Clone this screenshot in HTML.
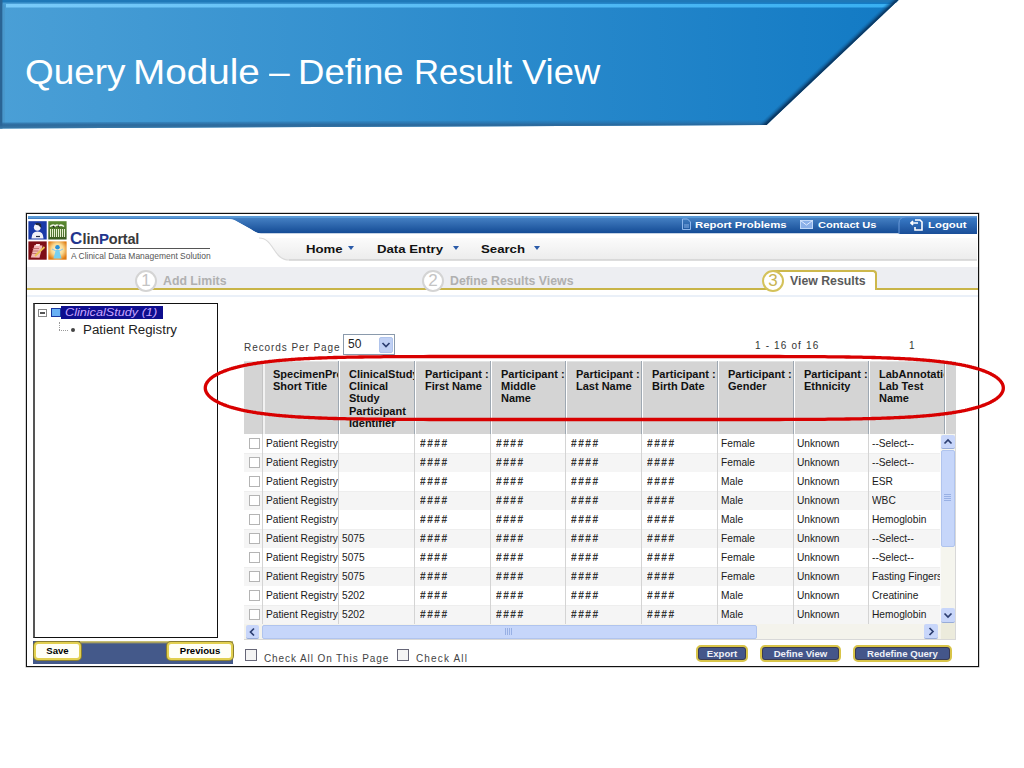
<!DOCTYPE html>
<html><head><meta charset="utf-8">
<style>
*{margin:0;padding:0;box-sizing:border-box}
html,body{width:1024px;height:768px;overflow:hidden;background:#fff;font-family:"Liberation Sans",sans-serif;position:relative}
.a{position:absolute}
.tw{position:absolute;top:52px;font-size:35px;color:#fff;white-space:nowrap;transform-origin:0 0;line-height:normal}
#shot{position:absolute;left:26px;top:213px;width:953px;height:454px;border:1px solid #111;box-shadow:0 0 0 0.5px rgba(0,0,0,0.35);background:#fff;overflow:hidden}
.ab{position:absolute}
.nav{position:absolute;top:243px;font-size:11px;font-weight:bold;color:#111;white-space:nowrap;transform:scaleX(1.2);transform-origin:0 0}
.tri{position:absolute;top:246px;width:0;height:0;border-left:3px solid transparent;border-right:3px solid transparent;border-top:4px solid #2a5aa8}
.toplink{position:absolute;top:219px;font-size:9.6px;font-weight:bold;color:#fff;white-space:nowrap}
.step{position:absolute;top:274px;font-size:12.3px;font-weight:bold;color:#b0b0b0;white-space:nowrap}
.circ{position:absolute;width:22px;height:22px;border-radius:50%;border:2px solid #d4d4d4;background:#fff;color:#c4c4c4;font-size:17px;line-height:18px;text-align:center}
.hc{position:absolute;top:368px;font-size:11px;font-weight:bold;line-height:12.2px;color:#111;padding-left:9px;white-space:nowrap;overflow:hidden;height:64px}
.hsep{position:absolute;top:361px;height:73px;width:2px;border-left:1px solid #9ea8b2;border-right:1px solid #fff}
.row{position:absolute;left:244px;width:700px;height:19px;background:#fff}
.row.alt{background:#f5f5f5;border-top:1px solid #eeeeee}
.cb{position:absolute;left:249px;width:11px;height:11px;border:1px solid #b4b4b4;background:#fff}
.cell{position:absolute;height:19px;line-height:19px;font-size:10.2px;color:#1a1a1a;white-space:nowrap;overflow:hidden}
.bsep{position:absolute;top:434px;height:190px;width:1px;background:#d4d4d4}
.btn{position:absolute;border-radius:4px;font-weight:bold;font-size:10px;text-align:center;white-space:nowrap}
.ybtn{position:absolute;top:645px;height:17px;border-radius:5px;background:#44568a;border:2px solid #d8c448;box-shadow:inset 0 0 0 1px #3a3a50;color:#eef0f6;font-size:9.6px;font-weight:bold;line-height:13px;text-align:center;white-space:nowrap}
</style></head><body>

<!-- banner -->
<svg class="a" style="left:0;top:0" width="1024" height="140">
 <defs>
  <linearGradient id="bg" x1="0" y1="0" x2="1" y2="0">
   <stop offset="0" stop-color="#4a9fd6"/>
   <stop offset="1" stop-color="#127ac4"/>
  </linearGradient>
  <linearGradient id="hl" x1="0" y1="0" x2="1" y2="0">
   <stop offset="0" stop-color="#7ccdfb"/>
   <stop offset="1" stop-color="#3ab2f4"/>
  </linearGradient>
  <linearGradient id="dg" gradientUnits="userSpaceOnUse" x1="833.5" y1="62.5" x2="828.5" y2="57.2">
   <stop offset="0" stop-color="#062848" stop-opacity="1"/>
   <stop offset="0.35" stop-color="#0a3a68" stop-opacity="0.85"/>
   <stop offset="1" stop-color="#127ac4" stop-opacity="0"/>
  </linearGradient>
  <linearGradient id="btg" x1="0" y1="0" x2="0" y2="1">
   <stop offset="0" stop-color="#2a70a8" stop-opacity="0"/>
   <stop offset="0.6" stop-color="#2a6496" stop-opacity="0.9"/>
   <stop offset="1" stop-color="#3a7aa8" stop-opacity="1"/>
  </linearGradient>
 </defs>
 <polygon points="0,0 898.5,0 766.5,125 0,128.5" fill="url(#bg)"/>
 <polygon points="0,0 898.5,0 896.5,2.5 0,2.5" fill="#1e78b8"/>
 <polygon points="6,4 894,4 890,7.5 6,7.5" fill="url(#hl)" opacity="0.95"/>
 <polygon points="0,0 2.5,0 2.5,128.5 0,128.5" fill="#2a6494"/>
 <polygon points="2.5,4 5,6 5,126 2.5,128" fill="#4a94c4" opacity="0.6"/>
 <polygon points="0,122.5 772,119.5 766.5,125 0,128.5" fill="url(#btg)"/>
 <polygon points="898.5,0 766.5,125 758,125 890,0" fill="url(#dg)"/>
</svg>
<div class="tw" style="left:24.9px;transform:scaleX(1.054)">Query</div>
<div class="tw" style="left:133.4px;transform:scaleX(1.105)">Module</div>
<div class="tw" style="left:268.5px;transform:scaleX(1.060)">–</div>
<div class="tw" style="left:298.3px;transform:scaleX(1.044)">Define</div>
<div class="tw" style="left:413.5px;transform:scaleX(0.990)">Result</div>
<div class="tw" style="left:522.2px;transform:scaleX(1.040)">View</div>

<div id="shot"></div>
<!-- header -->
<svg class="a" style="left:28px;top:215px" width="949" height="50">
 <defs>
  <linearGradient id="hb" x1="0" y1="0" x2="0" y2="1">
   <stop offset="0" stop-color="#4a86c8"/>
   <stop offset="1" stop-color="#134a94"/>
  </linearGradient>
  <linearGradient id="nb" x1="0" y1="0" x2="0" y2="1">
   <stop offset="0" stop-color="#fbfbfb"/>
   <stop offset="1" stop-color="#ececec"/>
  </linearGradient>
 </defs>
 <path d="M0 1 H949 V18.5 H233 C228 18.5 226 16 222 13.8 L208 6 C204 4 202 4 197 4 H0 Z" fill="url(#hb)"/>
 <path d="M0 1 H949 V3 H0Z" fill="#5a9ad6"/>
 <path d="M0 4 H197 C202 4 204 4 208 6 L222 13.8 C226 16 228 18.5 233 18.5 H949 V23 H0Z" fill="#fff"/>
 <path d="M231 23 H949 V45 H261 C245 45 246 23 231 23Z" fill="url(#nb)"/>
 <path d="M261 45 H949" stroke="#d2d2d2" stroke-width="1.5"/>
 <path d="M231 23 C246 23 245 45 261 45" stroke="#dadada" stroke-width="1.2" fill="none"/>
</svg>

<!-- logo icons -->
<svg class="a" style="left:27px;top:219px" width="42" height="43">
 <defs>
  <radialGradient id="og" cx="0.5" cy="0.45" r="0.6"><stop offset="0" stop-color="#fff8e0"/><stop offset="0.55" stop-color="#f8d890"/><stop offset="1" stop-color="#e07a10"/></radialGradient>
  <linearGradient id="gg" x1="0" y1="0" x2="0" y2="1"><stop offset="0" stop-color="#5a8a30"/><stop offset="1" stop-color="#3a5a20"/></linearGradient>
 </defs>
 <rect x="1.4" y="2.2" width="18.3" height="18.3" fill="#1a3aa8"/>
 <circle cx="10.3" cy="8.3" r="3.4" fill="#f4f4fa"/>
 <path d="M8 4.5 Q11 3 14 5 L14.5 9 L13 8 Q12 5.5 9 6Z" fill="#202840"/>
 <path d="M4.5 19.5 Q4.5 12.5 10.5 12.5 Q16.5 12.5 16.5 19.5Z" fill="#f0f0f8"/>
 <path d="M9 17.5 H13" stroke="#202840" stroke-width="1.2"/>
 <rect x="21.3" y="2.2" width="18.3" height="18.3" fill="url(#gg)"/>
 <path d="M23.5 10 V18 M25.5 10 V18 M27.5 10 V18 M29.5 10 V18 M31.5 10 V18 M33.5 10 V18 M35.5 10 V18 M37.5 10 V18" stroke="#e8f0d0" stroke-width="1.1"/>
 <path d="M23 7.5 Q26 5 28 7 Q30 5 32 7 Q34 5 37 7.5" stroke="#f4f8e8" stroke-width="1.6" fill="none"/>
 <path d="M26 7 L27.5 8.5 M31 6.5 L32.5 8.5" stroke="#202020" stroke-width="1.2"/>
 <rect x="1.4" y="22.4" width="18.3" height="18.3" fill="#7e0e16"/>
 <path d="M3.8 38.5 L7.5 26 L15.5 26.5 L12.5 38.8Z" fill="#f2b8b8"/>
 <path d="M9 25 L13 25 L12.6 27 L8.6 27Z" fill="#fce8e8"/>
 <path d="M5.5 29.5 H12 M5 32 H11.5 M4.5 34.5 H10" stroke="#b86060" stroke-width="0.8"/>
 <path d="M8 37 L17.5 28" stroke="#e8c050" stroke-width="1.8"/>
 <rect x="21.3" y="22.4" width="18.3" height="18.3" fill="url(#og)"/>
 <circle cx="30.5" cy="28.3" r="2.3" fill="#2890d8"/>
 <path d="M26.5 39.5 L28.8 31 L32.2 31 L34.5 39.5Z" fill="#78d0f0"/>
 <path d="M25 30 L29 32 M36 30 L32 32" stroke="#88c8f0" stroke-width="1"/>
</svg>
<div class="a" style="left:70px;top:229px;font-size:14.5px;font-weight:bold;color:#3a3a3a;white-space:nowrap;letter-spacing:-0.2px;line-height:20px"><span style="color:#22358e;font-size:17px;font-weight:bold;letter-spacing:0.3px">C</span>lin<span style="color:#22358e;font-size:15px;font-weight:bold">P</span>ortal</div>
<div class="a" style="left:70px;top:248px;width:140px;height:1px;background:#555"></div>
<div class="a" style="left:71px;top:251px;font-size:8.4px;color:#555;white-space:nowrap;transform:scaleX(1.01);transform-origin:0 0">A Clinical Data Management Solution</div>

<!-- top links -->
<svg class="a" style="left:880px;top:215px" width="97" height="19">
 <defs><linearGradient id="lg" x1="0" y1="0" x2="0" y2="1"><stop offset="0" stop-color="#3a7cc8"/><stop offset="1" stop-color="#1a4e98"/></linearGradient></defs>
 <path d="M19 19 L19 8 Q19 2 26 2 L97 2 L97 19Z" fill="url(#lg)"/>
 <path d="M19 19 L19 8 Q19 2 26 2 L97 2" stroke="#6a9ad8" stroke-width="1" fill="none"/>
</svg>
<svg class="a" style="left:681px;top:218px" width="12" height="13"><path d="M1.5 1 H6.5 L9.5 4 V11.5 H1.5Z" fill="none" stroke="#90b8ec" stroke-width="1"/><path d="M3 7 H8 M3 9 H8" stroke="#90b8ec" stroke-width="0.9"/></svg>
<svg class="a" style="left:800px;top:220px" width="14" height="10"><rect x="0.5" y="0.5" width="12" height="8" fill="#8ab0e8" stroke="#c0d8f8"/><path d="M0.5 0.5 L6.5 5 L12.5 0.5" stroke="#dfeaff" fill="none"/></svg>
<svg class="a" style="left:910px;top:218px" width="14" height="13"><path d="M5 2 H10 L12 4 V12 H5 V9" stroke="#fff" stroke-width="1.6" fill="none"/><path d="M1 5 H8 M3 3 L1 5 L3 7" stroke="#fff" stroke-width="1.6" fill="none"/></svg>
<div class="toplink" style="left:695px;transform:scaleX(1.185);transform-origin:0 0">Report Problems</div>
<div class="toplink" style="left:818px;transform:scaleX(1.155);transform-origin:0 0">Contact Us</div>
<div class="toplink" style="left:928px;transform:scaleX(1.185);transform-origin:0 0">Logout</div>

<!-- nav -->
<div class="nav" style="left:306px">Home</div><div class="tri" style="left:348px"></div>
<div class="nav" style="left:377px">Data Entry</div><div class="tri" style="left:453px"></div>
<div class="nav" style="left:481px">Search</div><div class="tri" style="left:534px"></div>

<!-- step bar -->
<div class="a" style="left:27px;top:267px;width:951px;height:21px;background:#edeef2"></div>
<div class="a" style="left:27px;top:288px;width:951px;height:2px;background:#c8b448"></div>
<div class="a" style="left:27px;top:295px;width:951px;height:2px;background:#eaf0f8"></div>
<div class="a" style="left:773px;top:270px;width:104px;height:20px;background:#fff;border:2px solid #cdb84c;border-left:none;border-bottom:none;border-radius:0 4px 0 0"></div>
<div class="circ" style="left:135px;top:270px">1</div><div class="step" style="left:163px">Add Limits</div>
<div class="circ" style="left:422px;top:270px">2</div><div class="step" style="left:450px">Define Results Views</div>
<div class="circ" style="left:762px;top:270px;border-color:#d4c25a;color:#c8b450">3</div><div class="step" style="left:790px;color:#5a5a5a">View Results</div>

<!-- tree -->
<div class="a" style="left:33px;top:303px;width:185px;height:335px;border:1px solid #111;border-left:2px solid #555;background:#fff"></div>
<div class="a" style="left:38px;top:309px;width:9px;height:8px;border:1px solid #888;background:#fff"></div>
<div class="a" style="left:40px;top:312px;width:5px;height:2px;background:#555"></div>
<div class="a" style="left:51px;top:308px;width:10px;height:9px;background:#68b0f4;border:1.5px solid #1838a0"></div>
<div class="a" style="left:61px;top:306px;width:102px;height:13px;background:#0e0e8e;color:#c8a4ff;font-style:italic;font-size:11px;line-height:13px;padding-left:4px;white-space:nowrap"><span style="display:inline-block;transform:scaleX(1.15);transform-origin:0 0">ClinicalStudy (1)</span></div>
<div class="a" style="left:59px;top:322px;width:1px;height:8px;border-left:1px dotted #999"></div>
<div class="a" style="left:59px;top:330px;width:9px;height:1px;border-top:1px dotted #999"></div>
<div class="a" style="left:71px;top:328px;width:4px;height:4px;border-radius:50%;background:#444"></div>
<div class="a" style="left:83px;top:323px;font-size:12px;color:#222;white-space:nowrap;transform:scaleX(1.11);transform-origin:0 0">Patient Registry</div>

<!-- save bar -->
<div class="a" style="left:33px;top:641px;width:200px;height:23px;background:#44598a"></div>
<div class="a" style="left:80px;top:641px;width:153px;height:3px;background:linear-gradient(#d8d080,#a8a060 50%,#44598a)"></div>
<div class="a" style="left:34px;top:642px;width:47px;height:18px;background:#fffff6;border:2px solid #e2d050;box-shadow:0 0 0 1px #8a7e30;border-radius:4px;font-size:9.6px;font-weight:bold;line-height:14px;text-align:center">Save</div>
<div class="a" style="left:167px;top:642px;width:66px;height:18px;background:#fffff6;border:2px solid #e2d050;box-shadow:0 0 0 1px #8a7e30;border-radius:4px;font-size:9.6px;font-weight:bold;line-height:14px;text-align:center">Previous</div>

<!-- records per page -->
<div class="a" style="left:244px;top:342px;font-size:10px;color:#3a3a3a;white-space:nowrap;letter-spacing:0.93px">Records Per Page</div>
<div class="a" style="left:343px;top:334px;width:52px;height:21px;border:1px solid #8a9aac;background:#fff;font-size:12px;line-height:19px;padding-left:4px;color:#222">50</div>
<div class="a" style="left:379px;top:337px;width:14px;height:16px;background:#c0d0f4;border:1px solid #b0c4ec;border-radius:2px"></div>
<svg class="a" style="left:379px;top:337px" width="14" height="16"><path d="M3.5 6 L7 9.5 L10.5 6" stroke="#2c3e70" stroke-width="1.7" fill="none"/></svg>
<div class="a" style="left:755px;top:340px;font-size:10px;color:#333;white-space:nowrap;letter-spacing:1.15px">1 - 16 of 16</div>
<div class="a" style="left:909px;top:340px;font-size:10px;color:#333;white-space:nowrap">1</div>

<!-- table header -->
<div class="a" style="left:244px;top:361px;width:712px;height:73px;background:#d4d4d4"></div>
<div class="a" style="left:244px;top:361px;width:712px;height:1px;background:#e2e4e4"></div>
<div class="hc" style="left:264px;width:75px">SpecimenProtocol<br>Short Title</div>
<div class="hc" style="left:340px;width:75px">ClinicalStudyParticipant<br>Clinical<br>Study<br>Participant<br>Identifier</div>
<div class="hc" style="left:416px;width:75px">Participant :<br>First Name</div>
<div class="hc" style="left:492px;width:74px">Participant :<br>Middle<br>Name</div>
<div class="hc" style="left:567px;width:75px">Participant :<br>Last Name</div>
<div class="hc" style="left:643px;width:75px">Participant :<br>Birth Date</div>
<div class="hc" style="left:719px;width:75px">Participant :<br>Gender</div>
<div class="hc" style="left:795px;width:74px">Participant :<br>Ethnicity</div>
<div class="hc" style="left:870px;width:74px">LabAnnotation<br>Lab Test<br>Name</div>
<div class="hsep" style="left:262px;border-left-color:#c4c4c4;border-right:2px solid #f2f2f2;width:3px"></div>
<div class="hsep" style="left:338px"></div>
<div class="hsep" style="left:414px"></div>
<div class="hsep" style="left:490px"></div>
<div class="hsep" style="left:565px"></div>
<div class="hsep" style="left:641px"></div>
<div class="hsep" style="left:717px"></div>
<div class="hsep" style="left:793px"></div>
<div class="hsep" style="left:868px"></div>
<div class="hsep" style="left:944px"></div>
<!-- body -->
<div class="row" style="top:434px"></div>
<div class="cb" style="top:438px"></div>
<div class="cell" style="left:266px;top:434px;width:72px">Patient Registry</div>
<div class="cell" style="left:342px;top:434px;width:72px"></div>
<div class="cell" style="left:420px;top:434px;width:72px;letter-spacing:1.5px;font-weight:bold;color:#333">####</div>
<div class="cell" style="left:496px;top:434px;width:71px;letter-spacing:1.5px;font-weight:bold;color:#333">####</div>
<div class="cell" style="left:571px;top:434px;width:72px;letter-spacing:1.5px;font-weight:bold;color:#333">####</div>
<div class="cell" style="left:647px;top:434px;width:72px;letter-spacing:1.5px;font-weight:bold;color:#333">####</div>
<div class="cell" style="left:721px;top:434px;width:72px">Female</div>
<div class="cell" style="left:797px;top:434px;width:71px">Unknown</div>
<div class="cell" style="left:872px;top:434px;width:71px">--Select--</div>
<div class="row alt" style="top:453px"></div>
<div class="cb" style="top:457px"></div>
<div class="cell" style="left:266px;top:453px;width:72px">Patient Registry</div>
<div class="cell" style="left:342px;top:453px;width:72px"></div>
<div class="cell" style="left:420px;top:453px;width:72px;letter-spacing:1.5px;font-weight:bold;color:#333">####</div>
<div class="cell" style="left:496px;top:453px;width:71px;letter-spacing:1.5px;font-weight:bold;color:#333">####</div>
<div class="cell" style="left:571px;top:453px;width:72px;letter-spacing:1.5px;font-weight:bold;color:#333">####</div>
<div class="cell" style="left:647px;top:453px;width:72px;letter-spacing:1.5px;font-weight:bold;color:#333">####</div>
<div class="cell" style="left:721px;top:453px;width:72px">Female</div>
<div class="cell" style="left:797px;top:453px;width:71px">Unknown</div>
<div class="cell" style="left:872px;top:453px;width:71px">--Select--</div>
<div class="row" style="top:472px"></div>
<div class="cb" style="top:476px"></div>
<div class="cell" style="left:266px;top:472px;width:72px">Patient Registry</div>
<div class="cell" style="left:342px;top:472px;width:72px"></div>
<div class="cell" style="left:420px;top:472px;width:72px;letter-spacing:1.5px;font-weight:bold;color:#333">####</div>
<div class="cell" style="left:496px;top:472px;width:71px;letter-spacing:1.5px;font-weight:bold;color:#333">####</div>
<div class="cell" style="left:571px;top:472px;width:72px;letter-spacing:1.5px;font-weight:bold;color:#333">####</div>
<div class="cell" style="left:647px;top:472px;width:72px;letter-spacing:1.5px;font-weight:bold;color:#333">####</div>
<div class="cell" style="left:721px;top:472px;width:72px">Male</div>
<div class="cell" style="left:797px;top:472px;width:71px">Unknown</div>
<div class="cell" style="left:872px;top:472px;width:71px">ESR</div>
<div class="row alt" style="top:491px"></div>
<div class="cb" style="top:495px"></div>
<div class="cell" style="left:266px;top:491px;width:72px">Patient Registry</div>
<div class="cell" style="left:342px;top:491px;width:72px"></div>
<div class="cell" style="left:420px;top:491px;width:72px;letter-spacing:1.5px;font-weight:bold;color:#333">####</div>
<div class="cell" style="left:496px;top:491px;width:71px;letter-spacing:1.5px;font-weight:bold;color:#333">####</div>
<div class="cell" style="left:571px;top:491px;width:72px;letter-spacing:1.5px;font-weight:bold;color:#333">####</div>
<div class="cell" style="left:647px;top:491px;width:72px;letter-spacing:1.5px;font-weight:bold;color:#333">####</div>
<div class="cell" style="left:721px;top:491px;width:72px">Male</div>
<div class="cell" style="left:797px;top:491px;width:71px">Unknown</div>
<div class="cell" style="left:872px;top:491px;width:71px">WBC</div>
<div class="row" style="top:510px"></div>
<div class="cb" style="top:514px"></div>
<div class="cell" style="left:266px;top:510px;width:72px">Patient Registry</div>
<div class="cell" style="left:342px;top:510px;width:72px"></div>
<div class="cell" style="left:420px;top:510px;width:72px;letter-spacing:1.5px;font-weight:bold;color:#333">####</div>
<div class="cell" style="left:496px;top:510px;width:71px;letter-spacing:1.5px;font-weight:bold;color:#333">####</div>
<div class="cell" style="left:571px;top:510px;width:72px;letter-spacing:1.5px;font-weight:bold;color:#333">####</div>
<div class="cell" style="left:647px;top:510px;width:72px;letter-spacing:1.5px;font-weight:bold;color:#333">####</div>
<div class="cell" style="left:721px;top:510px;width:72px">Male</div>
<div class="cell" style="left:797px;top:510px;width:71px">Unknown</div>
<div class="cell" style="left:872px;top:510px;width:71px">Hemoglobin</div>
<div class="row alt" style="top:529px"></div>
<div class="cb" style="top:533px"></div>
<div class="cell" style="left:266px;top:529px;width:72px">Patient Registry</div>
<div class="cell" style="left:342px;top:529px;width:72px">5075</div>
<div class="cell" style="left:420px;top:529px;width:72px;letter-spacing:1.5px;font-weight:bold;color:#333">####</div>
<div class="cell" style="left:496px;top:529px;width:71px;letter-spacing:1.5px;font-weight:bold;color:#333">####</div>
<div class="cell" style="left:571px;top:529px;width:72px;letter-spacing:1.5px;font-weight:bold;color:#333">####</div>
<div class="cell" style="left:647px;top:529px;width:72px;letter-spacing:1.5px;font-weight:bold;color:#333">####</div>
<div class="cell" style="left:721px;top:529px;width:72px">Female</div>
<div class="cell" style="left:797px;top:529px;width:71px">Unknown</div>
<div class="cell" style="left:872px;top:529px;width:71px">--Select--</div>
<div class="row" style="top:548px"></div>
<div class="cb" style="top:552px"></div>
<div class="cell" style="left:266px;top:548px;width:72px">Patient Registry</div>
<div class="cell" style="left:342px;top:548px;width:72px">5075</div>
<div class="cell" style="left:420px;top:548px;width:72px;letter-spacing:1.5px;font-weight:bold;color:#333">####</div>
<div class="cell" style="left:496px;top:548px;width:71px;letter-spacing:1.5px;font-weight:bold;color:#333">####</div>
<div class="cell" style="left:571px;top:548px;width:72px;letter-spacing:1.5px;font-weight:bold;color:#333">####</div>
<div class="cell" style="left:647px;top:548px;width:72px;letter-spacing:1.5px;font-weight:bold;color:#333">####</div>
<div class="cell" style="left:721px;top:548px;width:72px">Female</div>
<div class="cell" style="left:797px;top:548px;width:71px">Unknown</div>
<div class="cell" style="left:872px;top:548px;width:71px">--Select--</div>
<div class="row alt" style="top:567px"></div>
<div class="cb" style="top:571px"></div>
<div class="cell" style="left:266px;top:567px;width:72px">Patient Registry</div>
<div class="cell" style="left:342px;top:567px;width:72px">5075</div>
<div class="cell" style="left:420px;top:567px;width:72px;letter-spacing:1.5px;font-weight:bold;color:#333">####</div>
<div class="cell" style="left:496px;top:567px;width:71px;letter-spacing:1.5px;font-weight:bold;color:#333">####</div>
<div class="cell" style="left:571px;top:567px;width:72px;letter-spacing:1.5px;font-weight:bold;color:#333">####</div>
<div class="cell" style="left:647px;top:567px;width:72px;letter-spacing:1.5px;font-weight:bold;color:#333">####</div>
<div class="cell" style="left:721px;top:567px;width:72px">Female</div>
<div class="cell" style="left:797px;top:567px;width:71px">Unknown</div>
<div class="cell" style="left:872px;top:567px;width:71px">Fasting Fingerstick</div>
<div class="row" style="top:586px"></div>
<div class="cb" style="top:590px"></div>
<div class="cell" style="left:266px;top:586px;width:72px">Patient Registry</div>
<div class="cell" style="left:342px;top:586px;width:72px">5202</div>
<div class="cell" style="left:420px;top:586px;width:72px;letter-spacing:1.5px;font-weight:bold;color:#333">####</div>
<div class="cell" style="left:496px;top:586px;width:71px;letter-spacing:1.5px;font-weight:bold;color:#333">####</div>
<div class="cell" style="left:571px;top:586px;width:72px;letter-spacing:1.5px;font-weight:bold;color:#333">####</div>
<div class="cell" style="left:647px;top:586px;width:72px;letter-spacing:1.5px;font-weight:bold;color:#333">####</div>
<div class="cell" style="left:721px;top:586px;width:72px">Male</div>
<div class="cell" style="left:797px;top:586px;width:71px">Unknown</div>
<div class="cell" style="left:872px;top:586px;width:71px">Creatinine</div>
<div class="row alt" style="top:605px"></div>
<div class="cb" style="top:609px"></div>
<div class="cell" style="left:266px;top:605px;width:72px">Patient Registry</div>
<div class="cell" style="left:342px;top:605px;width:72px">5202</div>
<div class="cell" style="left:420px;top:605px;width:72px;letter-spacing:1.5px;font-weight:bold;color:#333">####</div>
<div class="cell" style="left:496px;top:605px;width:71px;letter-spacing:1.5px;font-weight:bold;color:#333">####</div>
<div class="cell" style="left:571px;top:605px;width:72px;letter-spacing:1.5px;font-weight:bold;color:#333">####</div>
<div class="cell" style="left:647px;top:605px;width:72px;letter-spacing:1.5px;font-weight:bold;color:#333">####</div>
<div class="cell" style="left:721px;top:605px;width:72px">Male</div>
<div class="cell" style="left:797px;top:605px;width:71px">Unknown</div>
<div class="cell" style="left:872px;top:605px;width:71px">Hemoglobin</div>
<div class="bsep" style="left:262px"></div>
<div class="bsep" style="left:338px"></div>
<div class="bsep" style="left:414px"></div>
<div class="bsep" style="left:490px"></div>
<div class="bsep" style="left:565px"></div>
<div class="bsep" style="left:641px"></div>
<div class="bsep" style="left:717px"></div>
<div class="bsep" style="left:793px"></div>
<div class="bsep" style="left:868px"></div>
<!-- v scrollbar -->
<div class="a" style="left:940px;top:434px;width:15px;height:190px;background:#f5f5ee;border-left:1px solid #fafafa"></div>
<div class="a" style="left:941px;top:450px;width:14px;height:97px;background:#c6d6fa;border:1px solid #b0c4ee;border-radius:2px"></div>
<div class="a" style="left:944px;top:494px;width:7px;height:8px;background:repeating-linear-gradient(180deg,#98b0e4 0 1px,transparent 1px 2px)"></div>
<div class="a" style="left:941px;top:435px;width:14px;height:14px;background:#c8d6fa;border-radius:2px;border-bottom:1px solid #98acd8"></div>
<svg class="a" style="left:941px;top:435px" width="14" height="14"><path d="M3.5 8.5 L7 5 L10.5 8.5" stroke="#2c3e70" stroke-width="1.7" fill="none"/></svg>
<div class="a" style="left:941px;top:608px;width:14px;height:15px;background:#c8d6fa;border-radius:2px;border-bottom:1px solid #98acd8"></div>
<svg class="a" style="left:941px;top:608px" width="14" height="15"><path d="M3.5 5.5 L7 9 L10.5 5.5" stroke="#2c3e70" stroke-width="1.7" fill="none"/></svg>
<div class="a" style="left:941px;top:623px;width:14px;height:16px;background:#ecebdc"></div>
<div class="a" style="left:955px;top:433px;width:1px;height:207px;background:#d8d8d8"></div>
<!-- h scrollbar -->
<div class="a" style="left:244px;top:624px;width:697px;height:15px;background:#f4f3ec"></div>
<div class="a" style="left:244px;top:639px;width:712px;height:1px;background:#d8d8d8"></div>
<div class="a" style="left:246px;top:625px;width:13px;height:14px;background:#c8d6fa;border-radius:2px;border-bottom:1px solid #98acd8"></div>
<svg class="a" style="left:246px;top:625px" width="13" height="14"><path d="M8 3.5 L4.5 7 L8 10.5" stroke="#2c3e70" stroke-width="1.7" fill="none"/></svg>
<div class="a" style="left:262px;top:625px;width:495px;height:14px;background:#c6d6fa;border:1px solid #b0c4ee;border-radius:2px"></div>
<div class="a" style="left:505px;top:628px;width:8px;height:7px;background:repeating-linear-gradient(90deg,#98b0e4 0 1px,transparent 1px 2px)"></div>
<div class="a" style="left:924px;top:624px;width:14px;height:15px;background:#c8d6fa;border-radius:2px;border-bottom:1px solid #98acd8"></div>
<svg class="a" style="left:924px;top:624px" width="14" height="15"><path d="M5.5 4 L9 7.5 L5.5 11" stroke="#2c3e70" stroke-width="1.7" fill="none"/></svg>

<!-- check all -->
<div class="a" style="left:245px;top:649px;width:12px;height:12px;border:1px solid #667;background:#f4f4f4"></div>
<div class="a" style="left:264px;top:653px;font-size:10px;color:#444;white-space:nowrap;letter-spacing:0.9px">Check All On This Page</div>
<div class="a" style="left:397px;top:649px;width:12px;height:12px;border:1px solid #667;background:#f4f4f4"></div>
<div class="a" style="left:416px;top:653px;font-size:10px;color:#444;white-space:nowrap;letter-spacing:1.15px">Check All</div>

<div class="ybtn" style="left:696px;width:52px">Export</div>
<div class="ybtn" style="left:760px;width:81px">Define View</div>
<div class="ybtn" style="left:853px;width:99px">Redefine Query</div>

<!-- red ellipse -->
<svg class="a" style="left:0;top:0" width="1024" height="768">
 <path d="M1003.3 388.0 L1003.3 388.2 L1003.3 388.4 L1003.3 388.7 L1003.3 388.9 L1003.2 389.1 L1003.2 389.3 L1003.2 389.5 L1003.1 389.8 L1003.1 390.0 L1003.0 390.2 L1003.0 390.4 L1002.9 390.6 L1002.8 390.9 L1002.8 391.1 L1002.7 391.3 L1002.6 391.5 L1002.5 391.7 L1002.4 391.9 L1002.3 392.2 L1002.2 392.4 L1002.1 392.6 L1002.0 392.8 L1001.8 393.0 L1001.7 393.3 L1001.6 393.5 L1001.4 393.7 L1001.3 393.9 L1001.1 394.1 L1001.0 394.3 L1000.8 394.5 L1000.6 394.8 L1000.4 395.0 L1000.3 395.2 L1000.1 395.4 L999.9 395.6 L999.7 395.8 L999.5 396.0 L999.3 396.3 L999.0 396.5 L998.8 396.7 L998.6 396.9 L998.4 397.1 L998.1 397.3 L997.9 397.5 L997.6 397.7 L997.4 397.9 L997.1 398.2 L996.8 398.4 L996.6 398.6 L996.3 398.8 L996.0 399.0 L995.7 399.2 L995.4 399.4 L995.1 399.6 L994.8 399.8 L994.5 400.0 L994.1 400.2 L993.8 400.4 L993.5 400.6 L993.1 400.8 L992.8 401.0 L992.4 401.2 L992.1 401.4 L991.7 401.6 L991.3 401.8 L990.9 402.0 L990.6 402.2 L990.2 402.4 L989.8 402.6 L989.4 402.8 L988.9 403.0 L988.5 403.2 L988.1 403.4 L987.7 403.6 L987.2 403.8 L986.8 403.9 L986.3 404.1 L985.9 404.3 L985.4 404.5 L984.9 404.7 L984.5 404.9 L984.0 405.1 L983.5 405.2 L983.0 405.4 L982.5 405.6 L982.0 405.8 L981.5 406.0 L980.9 406.2 L980.4 406.3 L979.9 406.5 L979.3 406.7 L978.8 406.9 L978.2 407.0 L977.6 407.2 L977.0 407.4 L976.5 407.6 L975.9 407.7 L975.3 407.9 L974.7 408.1 L974.0 408.2 L973.4 408.4 L972.8 408.6 L972.2 408.7 L971.5 408.9 L970.9 409.1 L970.2 409.2 L969.5 409.4 L968.8 409.6 L968.2 409.7 L967.5 409.9 L966.8 410.0 L966.0 410.2 L965.3 410.4 L964.6 410.5 L963.9 410.7 L963.1 410.8 L962.4 411.0 L961.6 411.1 L960.8 411.3 L960.0 411.4 L959.2 411.6 L958.4 411.7 L957.6 411.8 L956.8 412.0 L956.0 412.1 L955.1 412.3 L954.3 412.4 L953.4 412.5 L952.5 412.7 L951.7 412.8 L950.8 413.0 L949.9 413.1 L949.0 413.2 L948.0 413.4 L947.1 413.5 L946.1 413.6 L945.2 413.7 L944.2 413.9 L943.2 414.0 L942.2 414.1 L941.2 414.2 L940.2 414.4 L939.2 414.5 L938.1 414.6 L937.1 414.7 L936.0 414.8 L934.9 414.9 L933.8 415.1 L932.7 415.2 L931.6 415.3 L930.5 415.4 L929.3 415.5 L928.2 415.6 L927.0 415.7 L925.8 415.8 L924.6 415.9 L923.3 416.0 L922.1 416.1 L920.8 416.2 L919.5 416.3 L918.2 416.4 L916.9 416.5 L915.6 416.6 L914.2 416.7 L912.9 416.8 L911.5 416.9 L910.1 417.0 L908.6 417.0 L907.2 417.1 L905.7 417.2 L904.2 417.3 L902.7 417.4 L901.1 417.4 L899.6 417.5 L898.0 417.6 L896.3 417.7 L894.7 417.7 L893.0 417.8 L891.3 417.9 L889.6 418.0 L887.8 418.0 L886.0 418.1 L884.2 418.2 L882.3 418.2 L880.4 418.3 L878.5 418.3 L876.5 418.4 L874.5 418.5 L872.4 418.5 L870.3 418.6 L868.1 418.6 L865.9 418.7 L863.7 418.7 L861.4 418.8 L859.0 418.8 L856.6 418.9 L854.1 418.9 L851.6 418.9 L849.0 419.0 L846.3 419.0 L843.5 419.1 L840.6 419.1 L837.7 419.1 L834.6 419.2 L831.4 419.2 L828.1 419.2 L824.7 419.3 L821.2 419.3 L817.5 419.3 L813.6 419.3 L809.5 419.3 L805.2 419.4 L800.7 419.4 L795.9 419.4 L790.8 419.4 L785.2 419.4 L779.3 419.5 L772.7 419.5 L765.5 419.5 L757.3 419.5 L747.8 419.5 L736.5 419.5 L722.0 419.5 L700.9 419.5 L604.3 419.5 L507.7 419.5 L486.6 419.5 L472.1 419.5 L460.8 419.5 L451.3 419.5 L443.1 419.5 L435.9 419.5 L429.3 419.5 L423.4 419.4 L417.8 419.4 L412.7 419.4 L407.9 419.4 L403.4 419.4 L399.1 419.3 L395.0 419.3 L391.1 419.3 L387.4 419.3 L383.9 419.3 L380.5 419.2 L377.2 419.2 L374.0 419.2 L370.9 419.1 L368.0 419.1 L365.1 419.1 L362.3 419.0 L359.6 419.0 L357.0 418.9 L354.5 418.9 L352.0 418.9 L349.6 418.8 L347.2 418.8 L344.9 418.7 L342.7 418.7 L340.5 418.6 L338.3 418.6 L336.2 418.5 L334.1 418.5 L332.1 418.4 L330.1 418.3 L328.2 418.3 L326.3 418.2 L324.4 418.2 L322.6 418.1 L320.8 418.0 L319.0 418.0 L317.3 417.9 L315.6 417.8 L313.9 417.7 L312.3 417.7 L310.6 417.6 L309.0 417.5 L307.5 417.4 L305.9 417.4 L304.4 417.3 L302.9 417.2 L301.4 417.1 L300.0 417.0 L298.5 417.0 L297.1 416.9 L295.7 416.8 L294.4 416.7 L293.0 416.6 L291.7 416.5 L290.4 416.4 L289.1 416.3 L287.8 416.2 L286.5 416.1 L285.3 416.0 L284.0 415.9 L282.8 415.8 L281.6 415.7 L280.4 415.6 L279.3 415.5 L278.1 415.4 L277.0 415.3 L275.9 415.2 L274.8 415.1 L273.7 414.9 L272.6 414.8 L271.5 414.7 L270.5 414.6 L269.4 414.5 L268.4 414.4 L267.4 414.2 L266.4 414.1 L265.4 414.0 L264.4 413.9 L263.4 413.7 L262.5 413.6 L261.5 413.5 L260.6 413.4 L259.6 413.2 L258.7 413.1 L257.8 413.0 L256.9 412.8 L256.1 412.7 L255.2 412.5 L254.3 412.4 L253.5 412.3 L252.6 412.1 L251.8 412.0 L251.0 411.8 L250.2 411.7 L249.4 411.6 L248.6 411.4 L247.8 411.3 L247.0 411.1 L246.2 411.0 L245.5 410.8 L244.7 410.7 L244.0 410.5 L243.3 410.4 L242.6 410.2 L241.8 410.0 L241.1 409.9 L240.4 409.7 L239.8 409.6 L239.1 409.4 L238.4 409.2 L237.7 409.1 L237.1 408.9 L236.4 408.7 L235.8 408.6 L235.2 408.4 L234.6 408.2 L233.9 408.1 L233.3 407.9 L232.7 407.7 L232.1 407.6 L231.6 407.4 L231.0 407.2 L230.4 407.0 L229.8 406.9 L229.3 406.7 L228.7 406.5 L228.2 406.3 L227.7 406.2 L227.1 406.0 L226.6 405.8 L226.1 405.6 L225.6 405.4 L225.1 405.2 L224.6 405.1 L224.1 404.9 L223.7 404.7 L223.2 404.5 L222.7 404.3 L222.3 404.1 L221.8 403.9 L221.4 403.8 L220.9 403.6 L220.5 403.4 L220.1 403.2 L219.7 403.0 L219.2 402.8 L218.8 402.6 L218.4 402.4 L218.0 402.2 L217.7 402.0 L217.3 401.8 L216.9 401.6 L216.5 401.4 L216.2 401.2 L215.8 401.0 L215.5 400.8 L215.1 400.6 L214.8 400.4 L214.5 400.2 L214.1 400.0 L213.8 399.8 L213.5 399.6 L213.2 399.4 L212.9 399.2 L212.6 399.0 L212.3 398.8 L212.0 398.6 L211.8 398.4 L211.5 398.2 L211.2 397.9 L211.0 397.7 L210.7 397.5 L210.5 397.3 L210.2 397.1 L210.0 396.9 L209.8 396.7 L209.6 396.5 L209.3 396.3 L209.1 396.0 L208.9 395.8 L208.7 395.6 L208.5 395.4 L208.3 395.2 L208.2 395.0 L208.0 394.8 L207.8 394.5 L207.6 394.3 L207.5 394.1 L207.3 393.9 L207.2 393.7 L207.0 393.5 L206.9 393.3 L206.8 393.0 L206.6 392.8 L206.5 392.6 L206.4 392.4 L206.3 392.2 L206.2 391.9 L206.1 391.7 L206.0 391.5 L205.9 391.3 L205.8 391.1 L205.8 390.9 L205.7 390.6 L205.6 390.4 L205.6 390.2 L205.5 390.0 L205.5 389.8 L205.4 389.5 L205.4 389.3 L205.4 389.1 L205.3 388.9 L205.3 388.7 L205.3 388.4 L205.3 388.2 L205.3 388.0 L205.3 387.8 L205.3 387.6 L205.3 387.3 L205.3 387.1 L205.4 386.9 L205.4 386.7 L205.4 386.5 L205.5 386.2 L205.5 386.0 L205.6 385.8 L205.6 385.6 L205.7 385.4 L205.8 385.1 L205.8 384.9 L205.9 384.7 L206.0 384.5 L206.1 384.3 L206.2 384.1 L206.3 383.8 L206.4 383.6 L206.5 383.4 L206.6 383.2 L206.8 383.0 L206.9 382.7 L207.0 382.5 L207.2 382.3 L207.3 382.1 L207.5 381.9 L207.6 381.7 L207.8 381.5 L208.0 381.2 L208.2 381.0 L208.3 380.8 L208.5 380.6 L208.7 380.4 L208.9 380.2 L209.1 380.0 L209.3 379.7 L209.6 379.5 L209.8 379.3 L210.0 379.1 L210.2 378.9 L210.5 378.7 L210.7 378.5 L211.0 378.3 L211.2 378.1 L211.5 377.8 L211.8 377.6 L212.0 377.4 L212.3 377.2 L212.6 377.0 L212.9 376.8 L213.2 376.6 L213.5 376.4 L213.8 376.2 L214.1 376.0 L214.5 375.8 L214.8 375.6 L215.1 375.4 L215.5 375.2 L215.8 375.0 L216.2 374.8 L216.5 374.6 L216.9 374.4 L217.3 374.2 L217.7 374.0 L218.0 373.8 L218.4 373.6 L218.8 373.4 L219.2 373.2 L219.7 373.0 L220.1 372.8 L220.5 372.6 L220.9 372.4 L221.4 372.2 L221.8 372.1 L222.3 371.9 L222.7 371.7 L223.2 371.5 L223.7 371.3 L224.1 371.1 L224.6 370.9 L225.1 370.8 L225.6 370.6 L226.1 370.4 L226.6 370.2 L227.1 370.0 L227.7 369.8 L228.2 369.7 L228.7 369.5 L229.3 369.3 L229.8 369.1 L230.4 369.0 L231.0 368.8 L231.6 368.6 L232.1 368.4 L232.7 368.3 L233.3 368.1 L233.9 367.9 L234.6 367.8 L235.2 367.6 L235.8 367.4 L236.4 367.3 L237.1 367.1 L237.7 366.9 L238.4 366.8 L239.1 366.6 L239.8 366.4 L240.4 366.3 L241.1 366.1 L241.8 366.0 L242.6 365.8 L243.3 365.6 L244.0 365.5 L244.7 365.3 L245.5 365.2 L246.2 365.0 L247.0 364.9 L247.8 364.7 L248.6 364.6 L249.4 364.4 L250.2 364.3 L251.0 364.2 L251.8 364.0 L252.6 363.9 L253.5 363.7 L254.3 363.6 L255.2 363.5 L256.1 363.3 L256.9 363.2 L257.8 363.0 L258.7 362.9 L259.6 362.8 L260.6 362.6 L261.5 362.5 L262.5 362.4 L263.4 362.3 L264.4 362.1 L265.4 362.0 L266.4 361.9 L267.4 361.8 L268.4 361.6 L269.4 361.5 L270.5 361.4 L271.5 361.3 L272.6 361.2 L273.7 361.1 L274.8 360.9 L275.9 360.8 L277.0 360.7 L278.1 360.6 L279.3 360.5 L280.4 360.4 L281.6 360.3 L282.8 360.2 L284.0 360.1 L285.3 360.0 L286.5 359.9 L287.8 359.8 L289.1 359.7 L290.4 359.6 L291.7 359.5 L293.0 359.4 L294.4 359.3 L295.7 359.2 L297.1 359.1 L298.5 359.0 L300.0 359.0 L301.4 358.9 L302.9 358.8 L304.4 358.7 L305.9 358.6 L307.5 358.6 L309.0 358.5 L310.6 358.4 L312.3 358.3 L313.9 358.3 L315.6 358.2 L317.3 358.1 L319.0 358.0 L320.8 358.0 L322.6 357.9 L324.4 357.8 L326.3 357.8 L328.2 357.7 L330.1 357.7 L332.1 357.6 L334.1 357.5 L336.2 357.5 L338.3 357.4 L340.5 357.4 L342.7 357.3 L344.9 357.3 L347.2 357.2 L349.6 357.2 L352.0 357.1 L354.5 357.1 L357.0 357.1 L359.6 357.0 L362.3 357.0 L365.1 356.9 L368.0 356.9 L370.9 356.9 L374.0 356.8 L377.2 356.8 L380.5 356.8 L383.9 356.7 L387.4 356.7 L391.1 356.7 L395.0 356.7 L399.1 356.7 L403.4 356.6 L407.9 356.6 L412.7 356.6 L417.8 356.6 L423.4 356.6 L429.3 356.5 L435.9 356.5 L443.1 356.5 L451.3 356.5 L460.8 356.5 L472.1 356.5 L486.6 356.5 L507.7 356.5 L604.3 356.5 L700.9 356.5 L722.0 356.5 L736.5 356.5 L747.8 356.5 L757.3 356.5 L765.5 356.5 L772.7 356.5 L779.3 356.5 L785.2 356.6 L790.8 356.6 L795.9 356.6 L800.7 356.6 L805.2 356.6 L809.5 356.7 L813.6 356.7 L817.5 356.7 L821.2 356.7 L824.7 356.7 L828.1 356.8 L831.4 356.8 L834.6 356.8 L837.7 356.9 L840.6 356.9 L843.5 356.9 L846.3 357.0 L849.0 357.0 L851.6 357.1 L854.1 357.1 L856.6 357.1 L859.0 357.2 L861.4 357.2 L863.7 357.3 L865.9 357.3 L868.1 357.4 L870.3 357.4 L872.4 357.5 L874.5 357.5 L876.5 357.6 L878.5 357.7 L880.4 357.7 L882.3 357.8 L884.2 357.8 L886.0 357.9 L887.8 358.0 L889.6 358.0 L891.3 358.1 L893.0 358.2 L894.7 358.3 L896.3 358.3 L898.0 358.4 L899.6 358.5 L901.1 358.6 L902.7 358.6 L904.2 358.7 L905.7 358.8 L907.2 358.9 L908.6 359.0 L910.1 359.0 L911.5 359.1 L912.9 359.2 L914.2 359.3 L915.6 359.4 L916.9 359.5 L918.2 359.6 L919.5 359.7 L920.8 359.8 L922.1 359.9 L923.3 360.0 L924.6 360.1 L925.8 360.2 L927.0 360.3 L928.2 360.4 L929.3 360.5 L930.5 360.6 L931.6 360.7 L932.7 360.8 L933.8 360.9 L934.9 361.1 L936.0 361.2 L937.1 361.3 L938.1 361.4 L939.2 361.5 L940.2 361.6 L941.2 361.8 L942.2 361.9 L943.2 362.0 L944.2 362.1 L945.2 362.3 L946.1 362.4 L947.1 362.5 L948.0 362.6 L949.0 362.8 L949.9 362.9 L950.8 363.0 L951.7 363.2 L952.5 363.3 L953.4 363.5 L954.3 363.6 L955.1 363.7 L956.0 363.9 L956.8 364.0 L957.6 364.2 L958.4 364.3 L959.2 364.4 L960.0 364.6 L960.8 364.7 L961.6 364.9 L962.4 365.0 L963.1 365.2 L963.9 365.3 L964.6 365.5 L965.3 365.6 L966.0 365.8 L966.8 366.0 L967.5 366.1 L968.2 366.3 L968.8 366.4 L969.5 366.6 L970.2 366.8 L970.9 366.9 L971.5 367.1 L972.2 367.3 L972.8 367.4 L973.4 367.6 L974.0 367.8 L974.7 367.9 L975.3 368.1 L975.9 368.3 L976.5 368.4 L977.0 368.6 L977.6 368.8 L978.2 369.0 L978.8 369.1 L979.3 369.3 L979.9 369.5 L980.4 369.7 L980.9 369.8 L981.5 370.0 L982.0 370.2 L982.5 370.4 L983.0 370.6 L983.5 370.8 L984.0 370.9 L984.5 371.1 L984.9 371.3 L985.4 371.5 L985.9 371.7 L986.3 371.9 L986.8 372.1 L987.2 372.2 L987.7 372.4 L988.1 372.6 L988.5 372.8 L988.9 373.0 L989.4 373.2 L989.8 373.4 L990.2 373.6 L990.6 373.8 L990.9 374.0 L991.3 374.2 L991.7 374.4 L992.1 374.6 L992.4 374.8 L992.8 375.0 L993.1 375.2 L993.5 375.4 L993.8 375.6 L994.1 375.8 L994.5 376.0 L994.8 376.2 L995.1 376.4 L995.4 376.6 L995.7 376.8 L996.0 377.0 L996.3 377.2 L996.6 377.4 L996.8 377.6 L997.1 377.8 L997.4 378.1 L997.6 378.3 L997.9 378.5 L998.1 378.7 L998.4 378.9 L998.6 379.1 L998.8 379.3 L999.0 379.5 L999.3 379.7 L999.5 380.0 L999.7 380.2 L999.9 380.4 L1000.1 380.6 L1000.3 380.8 L1000.4 381.0 L1000.6 381.2 L1000.8 381.5 L1001.0 381.7 L1001.1 381.9 L1001.3 382.1 L1001.4 382.3 L1001.6 382.5 L1001.7 382.7 L1001.8 383.0 L1002.0 383.2 L1002.1 383.4 L1002.2 383.6 L1002.3 383.8 L1002.4 384.1 L1002.5 384.3 L1002.6 384.5 L1002.7 384.7 L1002.8 384.9 L1002.8 385.1 L1002.9 385.4 L1003.0 385.6 L1003.0 385.8 L1003.1 386.0 L1003.1 386.2 L1003.2 386.5 L1003.2 386.7 L1003.2 386.9 L1003.3 387.1 L1003.3 387.3 L1003.3 387.6 L1003.3 387.8Z" fill="none" stroke="#d80000" stroke-width="3.3"/>
</svg>
</body></html>
